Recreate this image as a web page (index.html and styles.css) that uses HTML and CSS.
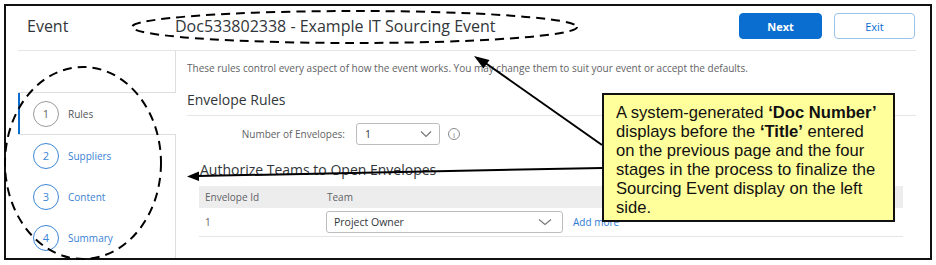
FILE: index.html
```html
<!DOCTYPE html>
<html lang="en">
<head>
  <meta charset="UTF-8">
  <meta name="viewport" content="width=device-width, initial-scale=1.0">
  <title>Event - Doc533802338</title>
  <link rel="stylesheet" href="styles.css">
</head>
<body>
  <div class="frame">
    <header class="topbar">
      <div class="page-label">Event</div>
      <div class="doc-title">Doc533802338 - Example IT Sourcing Event</div>
      <div class="actions">
        <button class="btn btn-primary">Next</button>
        <button class="btn btn-secondary">Exit</button>
      </div>
    </header>

    <div class="main">
      <nav class="steps">
        <div class="steps-top"></div>
        <div class="step active">
          <span class="step-num">1</span>
          <span class="step-name">Rules</span>
        </div>
        <div class="steps-rest">
          <div class="step">
            <span class="step-num">2</span>
            <span class="step-name">Suppliers</span>
          </div>
          <div class="step">
            <span class="step-num">3</span>
            <span class="step-name">Content</span>
          </div>
          <div class="step">
            <span class="step-num">4</span>
            <span class="step-name">Summary</span>
          </div>
        </div>
      </nav>

      <section class="content">
        <p class="intro">These rules control every aspect of how the event works. You may change them to suit your event or accept the defaults.</p>
        <h2 class="section-title">Envelope Rules</h2>

        <div class="field-row">
          <label class="field-label">Number of Envelopes:</label>
          <div class="select select-small">
            <span>1</span>
            <svg class="chevron" width="12" height="8" viewBox="0 0 12 8"><polyline points="1,1.5 6,6.5 11,1.5" /></svg>
          </div>
          <span class="info">i</span>
        </div>

        <div class="subsection">
          <h3 class="sub-title">Authorize Teams to Open Envelopes</h3>
          <table class="teams">
            <thead>
              <tr>
                <th class="col-id">Envelope Id</th>
                <th>Team</th>
              </tr>
            </thead>
            <tbody>
              <tr>
                <td class="col-id">1</td>
                <td>
                  <div class="team-cell">
                    <div class="select select-wide">
                      <span>Project Owner</span>
                      <svg class="chevron" width="14" height="8" viewBox="0 0 14 8"><polyline points="1,1.5 7,6.5 13,1.5" /></svg>
                    </div>
                    <a class="add-more" href="#">Add more</a>
                  </div>
                </td>
              </tr>
            </tbody>
          </table>
        </div>
      </section>
    </div>
  </div>

  <!-- annotation layer drawn over the screenshot -->
  <svg class="marks" width="936" height="265" viewBox="0 0 936 265">
    <ellipse cx="354.5" cy="27" rx="222.5" ry="16" class="dash" />
    <ellipse cx="83" cy="163" rx="78" ry="96" class="dash" />
    <line x1="602" y1="168" x2="198" y2="176" class="arrow-line" />
    <polygon points="187,176.5 199,171.5 199,181" class="arrow-head" />
    <line x1="602" y1="145" x2="484" y2="62" class="arrow-line" />
    <polygon points="474,56 489.5,60 483.5,68.5" class="arrow-head" />
  </svg>

  <div class="callout">
    A system-generated <b>‘Doc Number’</b><br>
    displays before the <b>‘Title’</b> entered<br>
    on the previous page and the four<br>
    stages in the process to finalize the<br>
    Sourcing Event display on the left<br>
    side.
  </div>
</body>
</html>
```
FILE: styles.css
```css
:root {
  --text-dark: #32363a;
  --text-muted: #5f6265;
  --blue: #0a6ed1;
  --blue-soft: #3c86d8;
  --line: #e5e5e5;
  --side-line: #dedede;
  --header-bg: #ededed;
}

body {
  margin: 0;
  font-family: "Open Sans", "Noto Sans", sans-serif;
  color: var(--text-dark);
  background: #fff;
}

.frame {
  margin: 4px 0 0 4px;
  width: 928px;
  height: 256px;
  box-sizing: border-box;
  border: 2px solid #111;
  overflow: hidden;
}

/* top bar */
.topbar {
  display: flex;
  align-items: center;
  height: 45px;
  box-sizing: border-box;
  margin: 0 14px 0 12px;
  padding: 0 1px 4px 9px;
  border-bottom: 1px solid var(--line);
}

.page-label {
  width: 148px;
  font-size: 16px;
}

.doc-title {
  font-size: 16px;
}

.actions {
  margin-left: auto;
  display: flex;
  gap: 12px;
}

.btn {
  height: 26px;
  border-radius: 4px;
  font-family: inherit;
  font-size: 11px;
  cursor: pointer;
}

.btn-primary {
  width: 83px;
  background-color: var(--blue);
  border: 1px solid var(--blue);
  color: #fff;
  font-weight: bold;
}

.btn-secondary {
  width: 81px;
  background-color: #fff;
  border: 1px solid #9cc3ea;
  color: var(--blue);
}

/* main area */
.main {
  display: flex;
  margin: 0 14px 0 12px;
  height: 207px;
}

.steps {
  width: 158px;
  flex-shrink: 0;
  display: flex;
  flex-direction: column;
}

.steps-top {
  height: 42px;
  box-sizing: border-box;
  border-right: 1px solid var(--side-line);
  border-bottom: 1px solid var(--side-line);
}

.steps-rest {
  flex: 1;
  border-top: 1px solid var(--side-line);
  border-right: 1px solid var(--side-line);
}

.step {
  display: flex;
  align-items: center;
  height: 41px;
  padding-left: 15px;
  font-size: 10px;
  color: #3b7fd4;
}

.step.active {
  height: 41px;
  padding-left: 13px;
  border-left: 2px solid var(--blue);
  color: #555;
}

.step-num {
  width: 26px;
  height: 26px;
  box-sizing: border-box;
  border: 1.5px solid var(--blue-soft);
  border-radius: 50%;
  display: flex;
  align-items: center;
  justify-content: center;
  font-size: 11px;
  color: var(--blue-soft);
}

.step.active .step-num {
  border-color: #9a9a9a;
  color: #666;
}

.step-name {
  margin-left: 9px;
}

/* content */
.content {
  flex: 1;
  padding-left: 11px;
}

.intro {
  margin: 10px 0 0;
  font-size: 10px;
  line-height: 14px;
  color: var(--text-muted);
}

.section-title {
  margin: 15px 0 0;
  padding-bottom: 5px;
  font-size: 14px;
  font-weight: normal;
  line-height: 20px;
  border-bottom: 1px solid var(--line);
}

.field-row {
  display: flex;
  align-items: center;
  margin-top: 7px;
}

.field-label {
  width: 158px;
  text-align: right;
  font-size: 10px;
  color: var(--text-muted);
}

.select {
  display: flex;
  align-items: center;
  justify-content: space-between;
  height: 22px;
  box-sizing: border-box;
  border: 1px solid #bdbdbd;
  border-radius: 3px;
  font-size: 10.5px;
  color: var(--text-dark);
}

.select-small {
  width: 84px;
  margin-left: 11px;
  padding: 0 7px 0 8px;
}

.select-wide {
  width: 237px;
  padding: 0 10px 0 7px;
}

.chevron polyline {
  fill: none;
  stroke: #777;
  stroke-width: 1.2;
}

.info {
  width: 12px;
  height: 12px;
  margin-left: 8px;
  box-sizing: border-box;
  border: 1px solid #8a8a8a;
  border-radius: 50%;
  display: flex;
  align-items: center;
  justify-content: center;
  font-size: 8px;
  color: #777;
}

.subsection {
  padding-left: 12px;
}

.sub-title {
  margin: 15px 0 0 1px;
  font-size: 14px;
  font-weight: normal;
  line-height: 20px;
}

.teams {
  margin-top: 6px;
  width: 704px;
  border-collapse: collapse;
  font-size: 10px;
}

.teams th {
  height: 22px;
  padding: 0 6px;
  text-align: left;
  font-weight: normal;
  color: var(--text-muted);
  background-color: var(--header-bg);
}

.teams td {
  height: 28px;
  padding: 0 6px;
  color: var(--text-muted);
  border-bottom: 1px solid var(--line);
}

.teams .col-id {
  width: 110px;
}

.team-cell {
  display: flex;
  align-items: center;
  margin-left: -1px;
}

.add-more {
  margin-left: 10px;
  font-size: 10px;
  color: #2b7cd3;
  text-decoration: none;
}

/* annotations */
.marks {
  position: absolute;
  top: 0;
  left: 0;
  pointer-events: none;
}

.dash {
  fill: none;
  stroke: #000;
  stroke-width: 2;
  stroke-dasharray: 9 6;
}

.arrow-line {
  stroke: #000;
  stroke-width: 2;
}

.arrow-head {
  fill: #000;
}

.callout {
  position: absolute;
  left: 602px;
  top: 93px;
  width: 293px;
  height: 129px;
  box-sizing: border-box;
  padding: 8px 4px 0 12px;
  background-color: #ffff9c;
  border: 2px solid #111;
  font-family: "Liberation Sans", Arial, sans-serif;
  font-size: 16.6px;
  line-height: 19px;
  color: #111;
  white-space: nowrap;
}
```
